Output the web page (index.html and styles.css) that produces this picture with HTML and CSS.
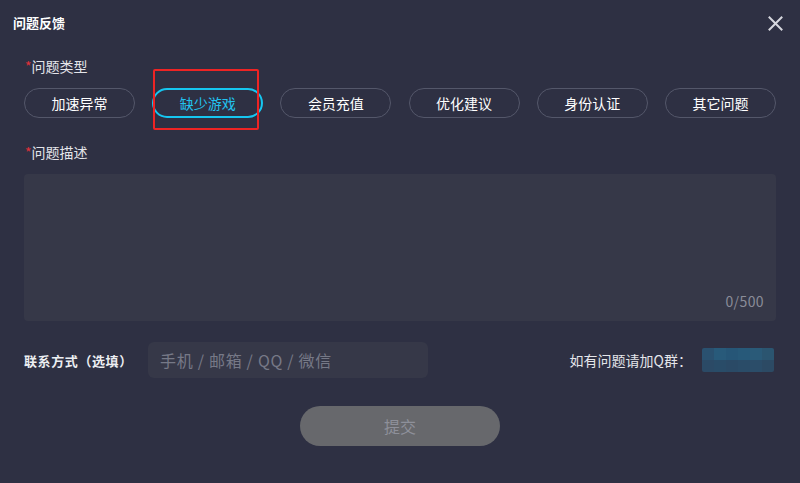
FILE: index.html
```html
<!DOCTYPE html>
<html lang="zh-CN">

<head>
  <meta charset="UTF-8" />
  <title>问题反馈</title>
  <link rel="stylesheet" href="styles.css">
</head>

<body>
  <div class="dialog">
    <div class="dialog-header">
      <h1 class="dialog-title">问题反馈</h1>
      <button class="close-btn" aria-label="关闭">
        <svg width="15" height="15" viewBox="0 0 15 15">
          <path d="M1.5 1.5 L13.5 13.5 M13.5 1.5 L1.5 13.5" stroke="#d6d7de" stroke-width="2" stroke-linecap="square" fill="none" />
        </svg>
      </button>
    </div>

    <div class="dialog-body">
      <div class="field-label"><span class="required">*</span>问题类型</div>
      <div class="type-list">
        <button class="type-pill">加速异常</button>
        <button class="type-pill active">缺少游戏</button>
        <button class="type-pill">会员充值</button>
        <button class="type-pill">优化建议</button>
        <button class="type-pill">身份认证</button>
        <button class="type-pill">其它问题</button>
        <!-- annotation box drawn over the selected option -->
        <div class="mark-box"></div>
      </div>

      <div class="field-label label-desc"><span class="required">*</span>问题描述</div>
      <div class="desc-box">
        <span class="char-count">0/500</span>
      </div>

      <div class="contact-row">
        <span class="contact-label">联系方式（选填）</span>
        <div class="contact-input">手机 / 邮箱 / QQ / 微信</div>
        <div class="qq-group">
          <span>如有问题请加Q群：</span>
          <div class="qq-blur">
            <i></i><i></i><i></i><i></i><i></i><i></i>
            <i></i><i></i><i></i><i></i><i></i><i></i>
          </div>
        </div>
      </div>

      <div class="submit-row">
        <button class="submit-btn">提交</button>
      </div>
    </div>
  </div>
</body>

</html>
```

FILE: styles.css
```css
* {
  margin: 0;
  padding: 0;
  box-sizing: border-box;
  font-family: "Noto Sans CJK SC", "Noto Sans", sans-serif;
}

html,
body {
  width: 800px;
  height: 483px;
  overflow: hidden;
}

body {
  background-color: #2e3043;
  color: #ffffff;
}

button {
  background: none;
  border: none;
  color: inherit;
  cursor: pointer;
}

.dialog-header {
  height: 46px;
  display: flex;
  align-items: center;
  justify-content: space-between;
  padding: 0 17px 0 13px;
}

.dialog-title {
  font-size: 13px;
  font-weight: bold;
  line-height: 20px;
}

.close-btn {
  width: 15px;
  height: 15px;
  display: flex;
  margin-top: 1px;
}

.dialog-body {
  padding: 0 24px;
}

.field-label {
  margin-top: 10px;
  font-size: 14px;
  line-height: 20px;
  color: #e4e5ea;
  padding-left: 1px;
}

.required {
  color: #e0303a;
}

.label-desc {
  margin-top: 24px;
}

.type-list {
  position: relative;
  margin-top: 12px;
  display: grid;
  grid-template-columns: repeat(6, 111px);
  justify-content: space-between;
}

.type-pill {
  height: 30px;
  border: 1px solid #54576a;
  border-radius: 15px;
  font-size: 14px;
  color: #ffffff;
}

.type-pill.active {
  border: 2px solid #16c6f0;
  color: #22c3f0;
}

.mark-box {
  position: absolute;
  left: 129px;
  top: -19px;
  width: 106px;
  height: 61px;
  border: 2px solid #ee2424;
  border-radius: 2px;
  pointer-events: none;
}

.desc-box {
  margin-top: 12px;
  height: 147px;
  background-color: #363848;
  border-radius: 4px;
  display: flex;
  justify-content: flex-end;
  align-items: flex-end;
  padding: 0 12px 11px 0;
}

.char-count {
  font-size: 14px;
  line-height: 18px;
  letter-spacing: 0.4px;
  color: #8a8c98;
}

.contact-row {
  margin-top: 21px;
  height: 36px;
  display: flex;
  align-items: center;
}

.contact-label {
  font-size: 13px;
  font-weight: bold;
  color: #eceef2;
  width: 124px;
  letter-spacing: 0.6px;
}

.contact-input {
  width: 280px;
  height: 36px;
  background-color: #363848;
  border-radius: 6px;
  padding-left: 12px;
  font-size: 16px;
  line-height: 36px;
  letter-spacing: 0.7px;
  color: #767987;
}

.qq-group {
  margin-left: auto;
  margin-right: 2px;
  display: flex;
  align-items: center;
  gap: 10px;
  font-size: 14px;
  color: #e4e5ea;
}

.qq-blur {
  width: 72px;
  height: 24px;
  border-radius: 2px;
  overflow: hidden;
  display: grid;
  grid-template-columns: repeat(6, 12px);
  grid-template-rows: 12px 12px;
}

.qq-blur i:nth-child(1) { background: #2a5170; }
.qq-blur i:nth-child(2) { background: #285a7a; }
.qq-blur i:nth-child(3) { background: #265677; }
.qq-blur i:nth-child(4) { background: #275979; }
.qq-blur i:nth-child(5) { background: #2a5a78; }
.qq-blur i:nth-child(6) { background: #2b5570; }
.qq-blur i:nth-child(7) { background: #2b4a66; }
.qq-blur i:nth-child(8) { background: #294c68; }
.qq-blur i:nth-child(9) { background: #2a4a66; }
.qq-blur i:nth-child(10) { background: #2a4c68; }
.qq-blur i:nth-child(11) { background: #2b4d69; }
.qq-blur i:nth-child(12) { background: #2c4a64; }

.submit-row {
  margin-top: 28px;
  display: flex;
  justify-content: center;
}

.submit-btn {
  width: 200px;
  height: 40px;
  border-radius: 20px;
  background-color: #67686c;
  color: #8e909a;
  font-size: 16px;
}
```
